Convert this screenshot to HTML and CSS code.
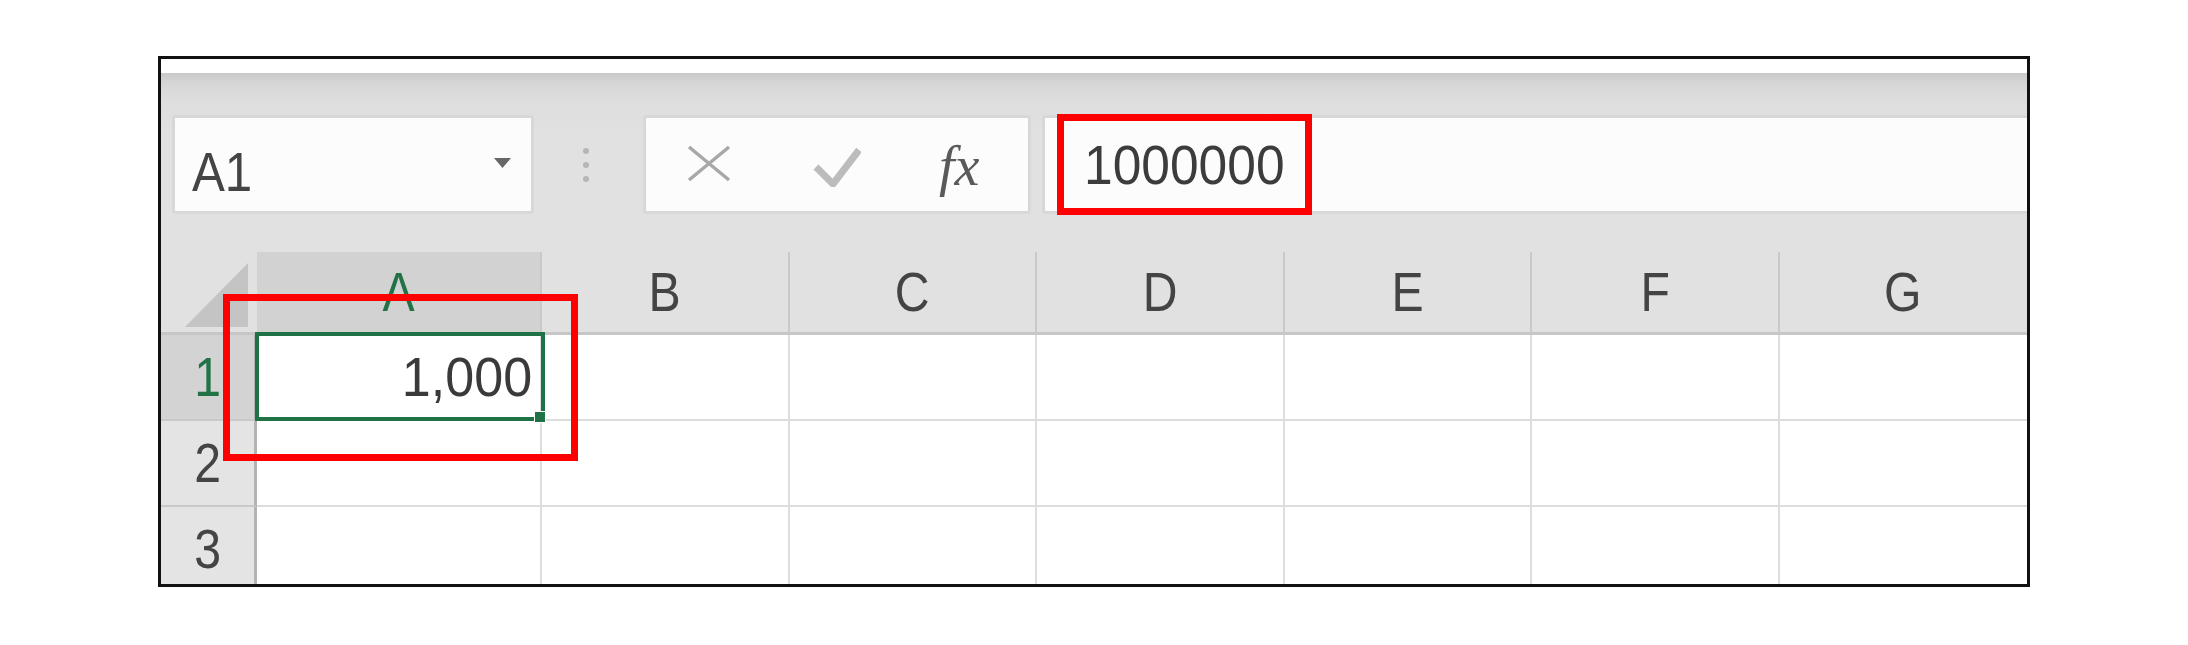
FILE: index.html
```html
<!DOCTYPE html>
<html lang="ja">
<head>
<meta charset="utf-8">
<title>Excel formula bar</title>
<link rel="stylesheet" href="styles.css">
</head>
<body>
<div class="frame">
  <div class="top-strip"></div>
  <div class="formula-bar">
    <div class="name-box">
      <span class="txt">A1</span>
      <svg class="caret" width="17" height="10" viewBox="0 0 17 10"><path d="M0 0H17L8.5 10Z" fill="#676767"/></svg>
    </div>
    <div class="grip">
      <svg width="8" height="36" viewBox="0 0 8 36"><circle cx="4" cy="4" r="3" fill="#b6b6b6"/><circle cx="4" cy="18" r="3" fill="#b6b6b6"/><circle cx="4" cy="32" r="3" fill="#b6b6b6"/></svg>
    </div>
    <div class="fx-box">
      <svg class="x-icon" width="44" height="37" viewBox="0 0 44 37"><path d="M2 2L42 35M42 2L2 35" stroke="#a8a8a8" stroke-width="3.5" fill="none"/></svg>
      <svg class="check-icon" width="48" height="40" viewBox="0 0 48 40"><path d="M3 20L20 37L46 3" stroke="#bcbcbc" stroke-width="7" fill="none" stroke-linejoin="round"/></svg>
      <span class="fx">fx</span>
    </div>
    <div class="input-box"><span class="txt num">1000000</span></div>
  </div>
  <div class="sheet">
    <div class="corner"><svg width="96" height="80" viewBox="0 0 96 80"><path d="M87 11V75H24Z" fill="#c4c4c4"/></svg></div>
    <div class="col-head sel"><span class="lbl">A</span></div>
    <div class="col-head"><span class="lbl">B</span></div>
    <div class="col-head"><span class="lbl">C</span></div>
    <div class="col-head"><span class="lbl">D</span></div>
    <div class="col-head"><span class="lbl">E</span></div>
    <div class="col-head"><span class="lbl">F</span></div>
    <div class="col-head last"><span class="lbl">G</span></div>

    <div class="row-head sel"><span class="lbl">1</span></div>
    <div class="cell a1"><span class="txt val">1,000</span><div class="selection"><div class="handle"></div></div></div>
    <div class="cell"></div><div class="cell"></div><div class="cell"></div><div class="cell"></div><div class="cell"></div><div class="cell last"></div>

    <div class="row-head"><span class="lbl">2</span></div>
    <div class="cell"></div><div class="cell"></div><div class="cell"></div><div class="cell"></div><div class="cell"></div><div class="cell"></div><div class="cell last"></div>

    <div class="row-head"><span class="lbl">3</span></div>
    <div class="cell"></div><div class="cell"></div><div class="cell"></div><div class="cell"></div><div class="cell"></div><div class="cell"></div><div class="cell last"></div>
  </div>
  <div class="mark mark-formula"></div>
  <div class="mark mark-cell"></div>
</div>
</body>
</html>
```

FILE: styles.css
```css
* { box-sizing: border-box; margin: 0; padding: 0; }
html, body { background: #ffffff; }
body {
  padding: 56px 0 0 158px;
  font-family: "Liberation Sans", Arial, sans-serif;
  color: #3a3a3a;
}

.frame {
  position: relative;
  width: 1872px;
  height: 531px;
  border: 3px solid #111111;
  overflow: hidden;
  display: flex;
  flex-direction: column;
  background: #ffffff;
}

.top-strip { flex: none; height: 14px; background: #ffffff; }

.formula-bar {
  flex: none;
  height: 179px;
  display: flex;
  align-items: flex-start;
  padding: 43px 0 0 12px;
  background: linear-gradient(#c8c8c8 0px, #d6d6d6 10px, #dedede 28px, #e1e1e1 60px, #e1e1e1 100%);
}

.txt {
  display: inline-block;
  font-size: 56px;
  line-height: 1;
  transform: scaleX(0.88);
  transform-origin: left center;
}

.name-box {
  width: 360px;
  height: 97px;
  background: #fcfcfc;
  border: 2px solid #d7d7d7;
  box-shadow: 0 0 2px rgba(0, 0, 0, 0.08);
  display: flex;
  align-items: center;
  justify-content: space-between;
  padding: 0 20px 0 17px;
}
.name-box .txt { margin-top: 14px; color: #444444; }
.caret { margin-top: -4px; }

.grip {
  width: 111px;
  height: 97px;
  display: flex;
  align-items: center;
  justify-content: center;
  padding-right: 5px;
}

.fx-box {
  width: 386px;
  height: 97px;
  background: #fcfcfc;
  border: 2px solid #d7d7d7;
  box-shadow: 0 0 2px rgba(0, 0, 0, 0.08);
  display: flex;
  align-items: center;
  padding-left: 41px;
}
.x-icon { margin-right: 82px; margin-top: -2px; }
.check-icon { margin-top: 4px; }
.fx {
  margin-left: 78px;
  font-family: "Liberation Serif", "Times New Roman", serif;
  font-style: italic;
  font-size: 56px;
  line-height: 1;
  color: #5a5a5a;
  margin-top: 2px;
}

.input-box {
  flex: 1;
  height: 97px;
  margin-left: 13px;
  background: #fcfcfc;
  border: 2px solid #d7d7d7;
  border-right: none;
  box-shadow: 0 0 2px rgba(0, 0, 0, 0.08);
  display: flex;
  align-items: center;
  padding-left: 39px;
}
.num { transform: scaleX(0.92); color: #3c3c3c; }

.sheet {
  flex: 1;
  display: grid;
  grid-template-columns: 96px 285px repeat(6, 1fr);
  grid-template-rows: 83px 86px 86px 86px;
  background: #ffffff;
}

.corner { background: #e1e1e1; border-bottom: 3px solid #c6c6c6; }
.corner svg { display: block; }

.lbl {
  display: inline-block;
  font-size: 56px;
  line-height: 1;
  transform: scaleX(0.86);
}

.col-head {
  background: #e1e1e1;
  border-right: 2px solid #c9c9c9;
  border-bottom: 3px solid #c6c6c6;
  display: flex;
  align-items: center;
  justify-content: center;
  color: #444444;
}
.col-head.sel { background: #d2d2d2; color: #217346; }
.col-head.last { border-right: none; }

.row-head {
  background: #e4e4e4;
  border-right: 3px solid #b3b3b3;
  border-bottom: 2px solid #c9c9c9;
  display: flex;
  align-items: center;
  justify-content: center;
  color: #444444;
}
.row-head.sel { background: #d3d3d3; color: #217346; }

.cell {
  background: #ffffff;
  border-right: 2px solid #dddddd;
  border-bottom: 2px solid #dddddd;
}
.cell.last { border-right: none; }

.a1 {
  position: relative;
  z-index: 2;
  display: flex;
  align-items: center;
  justify-content: flex-end;
  padding-right: 8px;
}
.val {
  transform: scaleX(0.93);
  transform-origin: right center;
  color: #3a3a3a;
}
.selection {
  position: absolute;
  left: -2px;
  right: -5px;
  top: -3px;
  bottom: -2px;
  border: 4px solid #1f7245;
}
.handle {
  position: absolute;
  right: -5px;
  bottom: -6px;
  width: 12px;
  height: 12px;
  background: #1f7245;
  border: 1px solid #ffffff;
}

.mark {
  position: absolute;
  border: 7px solid #ff0000;
  z-index: 5;
}
.mark-formula { left: 896px; top: 55px; width: 255px; height: 101px; }
.mark-cell { left: 62px; top: 235px; width: 355px; height: 167px; }
```
